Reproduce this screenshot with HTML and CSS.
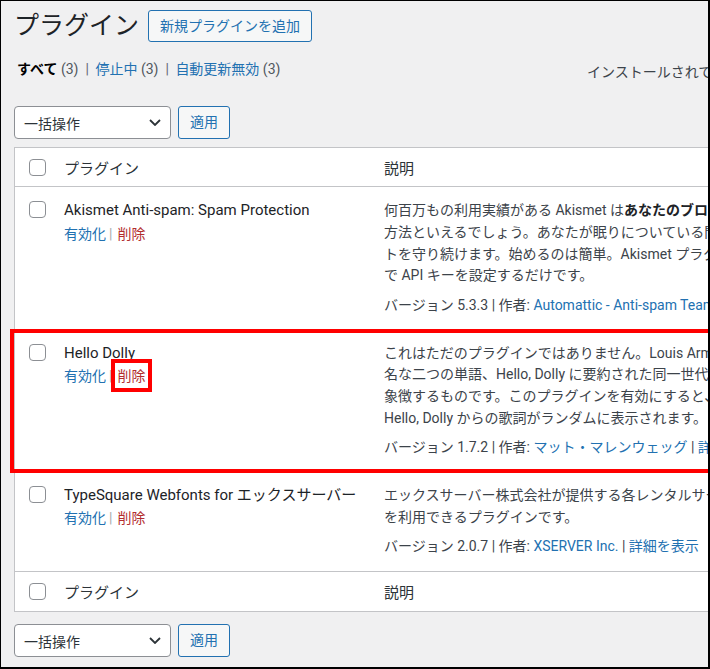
FILE: index.html
```html
<!DOCTYPE html>
<html lang="ja">
<head>
<meta charset="utf-8">
<title>プラグイン</title>
<link rel="stylesheet" href="styles.css">
</head>
<body>
<div class="frame">
  <div class="wrap">
    <div class="page-head">
      <h1 class="page-title">プラグイン</h1>
      <a class="btn add-new" href="#">新規プラグインを追加</a>
    </div>

    <div class="filter-bar">
      <ul class="subsubsub">
        <li class="current">すべて <span class="count">(3)</span></li>
        <li class="sep">|</li>
        <li><a href="#">停止中</a> <span class="count">(3)</span></li>
        <li class="sep">|</li>
        <li><a href="#">自動更新無効</a> <span class="count">(3)</span></li>
      </ul>
      <span class="search-label">インストールされているプラグインを検索</span>
    </div>

    <div class="bulk">
      <div class="select"><span>一括操作</span><svg class="chev" width="12" height="7" viewBox="0 0 12 7"><polyline points="1,1 6,6 11,1" fill="none" stroke="#2c3338" stroke-width="1.8"/></svg></div>
      <button class="btn apply">適用</button>
    </div>

    <div class="plugins">
      <div class="row head">
        <div class="col-check"><span class="cb"></span></div>
        <div class="col-name">プラグイン</div>
        <div class="col-desc">説明</div>
      </div>

      <div class="row plugin">
        <div class="col-check"><span class="cb"></span></div>
        <div class="col-name">
          <div class="pname">Akismet Anti-spam: Spam Protection</div>
          <div class="actions"><a href="#">有効化</a><span class="sep">|</span><a class="del" href="#">削除</a></div>
        </div>
        <div class="col-desc">
          <p>何百万もの利用実績がある Akismet は<strong>あなたのブログをスパムから保護する最良の</strong><br>方法といえるでしょう。あなたが眠りについている間も Akismet はサイ<br>トを守り続けます。始めるのは簡単。Akismet プラグインを有効化して設定画面<br>で API キーを設定するだけです。</p>
          <p class="version">バージョン 5.3.3 | 作者: <a href="#">Automattic - Anti-spam Team</a> | <a href="#">詳細を表示</a></p>
        </div>
      </div>

      <div class="row plugin highlight">
        <div class="col-check"><span class="cb"></span></div>
        <div class="col-name">
          <div class="pname">Hello Dolly</div>
          <div class="actions"><a href="#">有効化</a><span class="sep">|</span><a class="del marked" href="#">削除</a></div>
        </div>
        <div class="col-desc">
          <p>これはただのプラグインではありません。Louis Armstrong によって歌われた最も有<br>名な二つの単語、Hello, Dolly に要約された同一世代のすべての人々の希望と熱意を<br>象徴するものです。このプラグインを有効にすると、すべての管理画面の右上に<br>Hello, Dolly からの歌詞がランダムに表示されます。</p>
          <p class="version">バージョン 1.7.2 | 作者: <a href="#">マット・マレンウェッグ</a> | <a href="#">詳細を表示</a></p>
        </div>
      </div>

      <div class="row plugin">
        <div class="col-check"><span class="cb"></span></div>
        <div class="col-name">
          <div class="pname">TypeSquare Webfonts for エックスサーバー</div>
          <div class="actions"><a href="#">有効化</a><span class="sep">|</span><a class="del" href="#">削除</a></div>
        </div>
        <div class="col-desc">
          <p>エックスサーバー株式会社が提供する各レンタルサーバーでTypeSquareのWebフォント<br>を利用できるプラグインです。</p>
          <p class="version">バージョン 2.0.7 | 作者: <a href="#">XSERVER Inc.</a> | <a href="#">詳細を表示</a></p>
        </div>
      </div>

      <div class="row foot">
        <div class="col-check"><span class="cb"></span></div>
        <div class="col-name">プラグイン</div>
        <div class="col-desc">説明</div>
      </div>
    </div>

    <div class="bulk bottom">
      <div class="select"><span>一括操作</span><svg class="chev" width="12" height="7" viewBox="0 0 12 7"><polyline points="1,1 6,6 11,1" fill="none" stroke="#2c3338" stroke-width="1.8"/></svg></div>
      <button class="btn apply">適用</button>
    </div>
  </div>
</div>
</body>
</html>
```

FILE: styles.css
```css
* { box-sizing: border-box; }
html, body { margin: 0; padding: 0; }
body {
  font-family: Roboto, "Noto Sans CJK JP", sans-serif;
  font-size: 14px;
  color: #3c434a;
  background: #000;
}
a { color: #2271b1; text-decoration: none; }

.frame {
  width: 710px;
  height: 669px;
  border-style: solid;
  border-color: #000;
  border-width: 1px 2px 2px 1px;
  background: #f0f0f1;
  overflow: hidden;
}
.wrap {
  width: 1000px;
  padding: 9px 0 0 13px;
}

.page-head {
  display: flex;
  align-items: center;
  gap: 9px;
  height: 32px;
}
.page-title {
  margin: 0;
  font-size: 25px;
  font-weight: 400;
  line-height: 32px;
  color: #1d2327;
}
.btn {
  display: inline-block;
  height: 32px;
  padding: 0 11px;
  border: 1px solid #2271b1;
  border-radius: 3px;
  background: #f6f7f7;
  color: #2271b1;
  font-family: inherit;
  font-size: 14px;
  line-height: 30px;
}

.filter-bar {
  margin-top: 17px;
  height: 21.4px;
  display: grid;
  grid-template-columns: 573px auto;
  align-items: start;
  line-height: 21.4px;
}
.subsubsub {
  list-style: none;
  margin: 0;
  padding: 0 0 0 3px;
  display: flex;
  color: #50575e;
}
.subsubsub li { white-space: nowrap; }
.subsubsub .current { font-weight: 700; color: #000; }
.subsubsub .current .count { font-weight: 400; color: #50575e; }
.subsubsub .count { color: #50575e; }
.subsubsub .sep { color: #646970; margin: 0 6.5px 0 7px; }
.search-label {
  margin-top: 3px;
  white-space: nowrap;
  color: #3c434a;
}

.bulk {
  margin-top: 26px;
  display: flex;
  gap: 7px;
  height: 33px;
}
.bulk.bottom { margin-top: 12px; }
.select {
  width: 157px;
  height: 33px;
  display: flex;
  align-items: center;
  justify-content: space-between;
  padding: 0 9px 0 9px;
  border: 1px solid #8c8f94;
  border-radius: 4px;
  background: #fff;
  color: #2c3338;
}
.apply { height: 33px; width: 52px; padding: 0; line-height: 31px; }

.plugins {
  margin-top: 8px;
  border: 1px solid #c3c4c7;
  background: #fff;
}
.row {
  display: grid;
  grid-template-columns: 40px 317px 1fr;
}
.col-check { padding-left: 14px; }
.col-name { padding-left: 9px; }
.col-desc { padding-left: 12px; }

.cb {
  display: block;
  width: 17px;
  height: 17px;
  border: 1px solid #8c8f94;
  border-radius: 4px;
  background: #fff;
}

.row.head, .row.foot {
  height: 39px;
  align-items: center;
  color: #2c3338;
  font-size: 15px;
}
.row.head { border-bottom: 1px solid #c3c4c7; }
.row.foot { border-top: 1px solid #c3c4c7; height: 40px; }

.row.plugin {
  padding: 13px 0 13.4px;
  line-height: 21.67px;
}
.row.plugin .cb { margin-top: 0.8px; }
.pname { color: #1d2327; white-space: nowrap; font-size: 15px; }
.actions { margin-top: 1.5px; white-space: nowrap; }
.actions .sep { color: #a7aaad; margin: 0 5px 0 3px; }
.actions .del { color: #b32d2e; }

.col-desc p { margin: 0; white-space: nowrap; }
.col-desc strong { color: #1d2327; }
.col-desc .version { margin-top: 7.6px; }

.highlight { position: relative; }
.highlight::after {
  content: "";
  position: absolute;
  left: -5px;
  top: -1px;
  bottom: -1px;
  width: 697px;
  border: 4px solid #f00;
  pointer-events: none;
}
.marked {
  position: relative;
  display: inline-block;
}
.marked::after {
  content: "";
  position: absolute;
  left: -6px;
  right: -7px;
  top: -7px;
  bottom: -4px;
  border: 4px solid #f00;
}
```
